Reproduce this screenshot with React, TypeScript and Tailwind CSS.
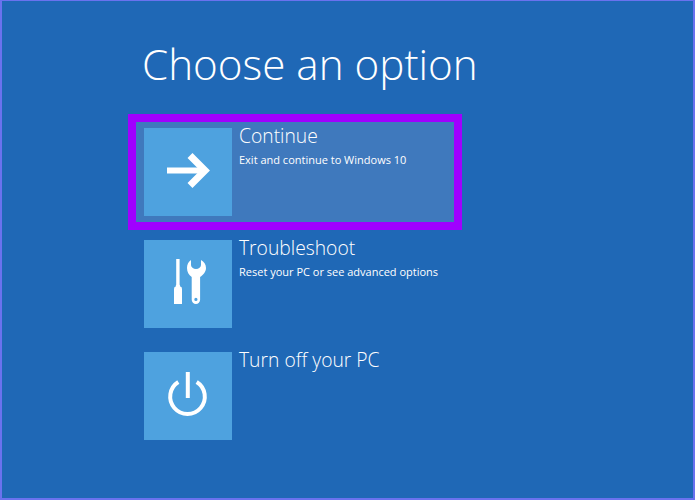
const font = { fontFamily: '"Open Sans", sans-serif' };

function ArrowIcon() {
  return (
    <svg viewBox="0 0 88 88" className="w-[88px] h-[88px]">
      <path d="M23 42.500H62" stroke="#fff" strokeWidth="6" fill="none" />
      <path d="M46 27.500L61 42.500L46 57.500" stroke="#fff" strokeWidth="7" fill="none" />
    </svg>
  );
}

function ToolsIcon() {
  return (
    <svg viewBox="0 0 88 88" className="w-[88px] h-[88px]" fill="#fff">
      <path d="M32.200 19h3.400v25.500l1 2.500h.9l.5 2v15h-8V49l.5-2h.9l.8-2.500z" />
      <path
        fillRule="evenodd"
        d="M47 20c-2.500 1.500-4 4.500-4 8 0 4 1.800 7 4.700 9v22.800a4.200 4.200 0 0 0 8.400 0V37c3-2 5.900-5 5.900-9 0-3.500-2-6.500-5-8v5a5 4 0 0 1-10 0zM51.900 57.800a1.600 1.600 0 1 0 0 3.200 1.600 1.600 0 0 0 0-3.200z"
      />
    </svg>
  );
}

function PowerIcon() {
  return (
    <svg viewBox="0 0 88 88" className="w-[88px] h-[88px]" fill="none" stroke="#fff">
      <path d="M43.800 20V46" strokeWidth="4" />
      <path d="M34.300 30A17.300 17.300 0 1 0 52.700 30" strokeWidth="4" />
    </svg>
  );
}

function Option({ title, detail, icon }: { title: string; detail?: string; icon: React.ReactNode }) {
  return (
    <div className="flex items-start">
      <div className="w-[88px] h-[88px] shrink-0 bg-[#4ea2df]">{icon}</div>
      <div className="pl-[7px] text-white">
        <p className="text-[19.300px] leading-[26px] -mt-[5px] font-light">{title}</p>
        {detail && <p className="text-[11px] leading-[14px] mt-[4px]">{detail}</p>}
      </div>
    </div>
  );
}

export default function App() {
  return (
    <div
      style={font}
      className="w-[695px] h-[500px] overflow-hidden bg-[#1f68b6] border-x-2 border-t border-b-2 border-[#6a72ee] pl-[126px] pt-[33px]"
    >
      <h1 className="pl-[14px] text-[42.200px] leading-[60px] font-light text-white">Choose an option</h1>
      <div className="mt-[20px] w-[334px] h-[116px] border-[8px] border-[#a000ff] bg-[#3f79bd] pl-[8px] pt-[6px]">
        <Option title="Continue" detail="Exit and continue to Windows 10" icon={<ArrowIcon />} />
      </div>
      <div className="mt-[10px] ml-[16px]">
        <Option title="Troubleshoot" detail="Reset your PC or see advanced options" icon={<ToolsIcon />} />
      </div>
      <div className="mt-[24px] ml-[16px]">
        <Option title="Turn off your PC" icon={<PowerIcon />} />
      </div>
    </div>
  );
}
